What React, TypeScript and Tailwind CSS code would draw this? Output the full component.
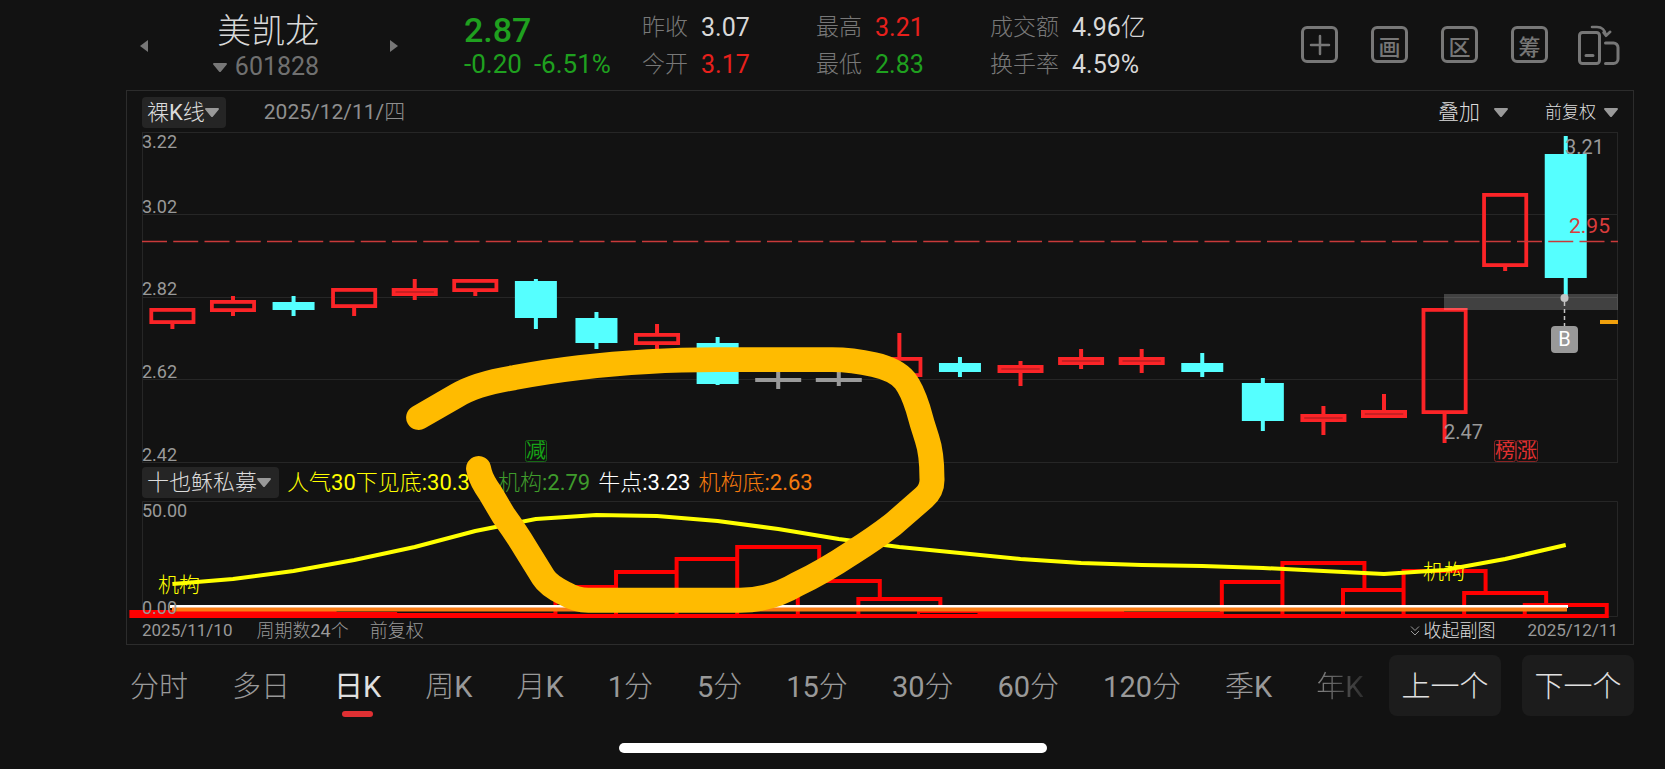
import { clsx } from "clsx";

type Kind = "up" | "down" | "flat";
type Candle = [kind: Kind, top: number, bottom: number, high: number, low: number];

const STEP = 60.58;
const centre = (i: number) => 30.4 + STEP * i;

const candles: Candle[] = [
  ["up", 176, 192, 176, 197],
  ["up", 168, 180, 164, 184],
  ["down", 170, 178, 164, 184],
  ["up", 156, 176, 156, 184],
  ["up", 156, 164, 147, 168],
  ["up", 147, 160, 147, 164],
  ["down", 149, 186, 147, 197],
  ["down", 186, 211, 180, 217],
  ["up", 201, 213, 192, 218],
  ["down", 211, 252, 205, 253],
  ["flat", 246, 250, 240, 257],
  ["flat", 246, 250, 240, 254],
  ["up", 225, 245, 201, 245],
  ["down", 231, 240, 225, 245],
  ["up", 233, 241, 229, 254],
  ["up", 225, 233, 217, 237],
  ["up", 225, 233, 217, 241],
  ["down", 231, 240, 221, 245],
  ["down", 251, 289, 246, 299],
  ["up", 282, 290, 274, 303],
  ["up", 278, 286, 262, 286],
  ["up", 176, 282, 176, 311],
  ["up", 61, 135, 61, 139],
  ["down", 22, 146, 4, 164],
];

const colors: Record<Kind, string> = {
  up: "#fb2427",
  down: "#55ffff",
  flat: "#9a9a9a",
};

// top edge of each bar in the indicator pane
const barTops = [
  109, 109, 110, 111, 112, 112, 112, 84, 69, 56, 44, 78, 96, 108, 110, 110, 111, 111, 79, 60, 87, 68, 90, 102,
];

const trend = [
  83, 78, 70, 59, 46, 30, 18, 14, 15, 20, 28, 38, 46, 52, 58, 62, 64, 65, 67, 70, 73, 69, 58, 44,
];

const priceTicks = [
  { label: "3.22", line: 0, text: 16 },
  { label: "3.02", line: 82, text: 81 },
  { label: "2.82", line: 165, text: 163 },
  { label: "2.62", line: 247, text: 246 },
  { label: "2.42", line: 330, text: 329 },
];

const quotes = [
  { label: "昨收", value: "3.07", color: "text-[#d8d8d8]" },
  { label: "最高", value: "3.21", color: "text-[#e8201c]" },
  { label: "成交额", value: "4.96亿", color: "text-[#d8d8d8]" },
  { label: "今开", value: "3.17", color: "text-[#e8201c]" },
  { label: "最低", value: "2.83", color: "text-[#1fa01f]" },
  { label: "换手率", value: "4.59%", color: "text-[#d8d8d8]" },
];

const tabs = ["分时", "多日", "日K", "周K", "月K", "1分", "5分", "15分", "30分", "60分", "120分", "季K"];

function Caret({ className }: { className?: string }) {
  return (
    <svg viewBox="0 0 14 9" className={clsx("h-[9px] w-[14px] shrink-0", className)} fill="currentColor" aria-hidden>
      <path d="M1.2 0h11.6c1 0 1.5 1 .8 1.8L8 8.4c-.6.7-1.4.7-2 0L.4 1.8C-.3 1 .2 0 1.2 0z" />
    </svg>
  );
}

function ToolButton({ label, children }: { label: string; children: React.ReactNode }) {
  return (
    <button
      aria-label={label}
      className="flex h-[37px] w-[37px] items-center justify-center rounded-md border-[3px] border-[#777] font-['Noto_Sans_CJK_SC',sans-serif] text-[22px] leading-none font-medium text-[#777]"
    >
      {children}
    </button>
  );
}

function Header() {
  return (
    <header className="flex h-[90px] items-center pt-0.5 pr-[45px] pl-[140px]">
      <div className="flex w-[258px] shrink-0 items-center justify-between text-[#777]">
        <button aria-label="上一只">
          <svg viewBox="0 0 8 12" className="h-3 w-2" fill="currentColor">
            <path d="M8 0v12L0 6z" />
          </svg>
        </button>
        <div className="mr-1.5 flex flex-col items-end pt-1">
          <h1 className="text-[34px] leading-[38px] text-[#d8d8d8]">美凯龙</h1>
          <button className="flex items-center gap-2 text-[25px] leading-[34px] text-[#707070]">
            <Caret className="text-[#777]" />
            601828
          </button>
        </div>
        <button aria-label="下一只">
          <svg viewBox="0 0 8 12" className="h-3 w-2" fill="currentColor">
            <path d="M0 0v12l8-6z" />
          </svg>
        </button>
      </div>

      <div className="ml-[66px] w-[178px] shrink-0 text-[#1fa01f]">
        <div className="text-[34px] leading-9 font-medium">2.87</div>
        <div className="flex gap-3 text-[26px] leading-8">
          <span>-0.20</span>
          <span>-6.51%</span>
        </div>
      </div>

      <dl className="grid shrink-0 grid-cols-[174px_174px_174px] gap-y-1">
        {quotes.map((q) => (
          <div key={q.label} className="flex items-center gap-[13px] leading-[33px]">
            <dt className="text-[23px] text-[#787878]">{q.label}</dt>
            <dd className={clsx("text-[25px] whitespace-nowrap", q.color)}>{q.value}</dd>
          </div>
        ))}
      </dl>

      <div className="ml-auto flex items-center gap-[30px] pb-[3px]">
        <div className="flex gap-[33px]">
          <ToolButton label="添加">
            <svg viewBox="0 0 22 22" className="h-[22px] w-[22px] shrink-0" stroke="currentColor" strokeWidth="2.5" strokeLinecap="round">
              <path d="M2 11h18M11 2v18" />
            </svg>
          </ToolButton>
          <ToolButton label="画线">画</ToolButton>
          <ToolButton label="区间统计">区</ToolButton>
          <ToolButton label="筹码分布">筹</ToolButton>
        </div>
        <button aria-label="切换竖屏" className="text-[#777]">
          <svg viewBox="0 0 42 40" className="h-10 w-[42px]" fill="none" stroke="currentColor" strokeWidth="3" strokeLinecap="round" strokeLinejoin="round">
            <rect x="1.5" y="7.5" width="20" height="31" rx="3" />
            <path d="M8 30.5h7M27.5 18h8a4.5 4.5 0 0 1 4.5 4.5v11.500a4.500 4.500 0 0 1-4.500 4.500h-8" />
            <path d="M14 2h5c5 0 8 3 9 8.500M25.500 7.500l2.500 3.300 4.200-4" strokeWidth="2.600" />
          </svg>
        </button>
      </div>
    </header>
  );
}

function PriceChart() {
  return (
    <svg viewBox="0 0 1476 331" className="block w-full overflow-visible">
      <path d="M.5.5h1475v330H.5z" fill="none" stroke="#262626" />
      {priceTicks.map((t) => (
        <g key={t.label}>
          <line x1="0" x2="1476" y1={t.line + 0.5} y2={t.line + 0.5} stroke="#262626" />
          <text x="0" y={t.text} fontSize="18" fill="#999">
            {t.label}
          </text>
        </g>
      ))}

      {candles.map(([kind, top, bottom, high, low], i) => {
        const x = centre(i);
        const color = colors[kind];
        const half = kind === "down" ? 21 : 23;
        return (
          <g key={i}>
            {high < top && <rect x={x - 2} y={high} width="4" height={top - high} fill={color} />}
            {low > bottom && <rect x={x - 2} y={bottom} width="4" height={low - bottom} fill={color} />}
            {kind === "up" ? (
              <rect
                x={x - half + 1.9}
                y={top + 1.9}
                width={half * 2 - 3.8}
                height={bottom - top - 3.8}
                fill="none"
                stroke={color}
                strokeWidth="3.8"
              />
            ) : (
              <rect x={x - half} y={top} width={half * 2} height={bottom - top} fill={color} />
            )}
          </g>
        );
      })}

      <line x1="0" x2="1476" y1="109.5" y2="109.5" stroke="#c93a3a" strokeWidth="1.5" strokeDasharray="25 6.25" />
      <rect x="1302" y="162" width="174" height="16" fill="#fff" fillOpacity="0.2" />
      <rect x="1458" y="188" width="18" height="4" fill="#f0a00c" />

      <g fontSize="20" fill="#999">
        <text x="1423" y="22">3.21</text>
        <text x="1302" y="307">2.47</text>
        <text x="1427" y="101" fontSize="21" fill="#d93c3c">
          2.95
        </text>
      </g>

      {/* buy marker */}
      <line x1="1422.5" x2="1422.5" y1="170" y2="194" stroke="#c4c4c4" strokeWidth="1.5" strokeDasharray="4 3" />
      <circle cx="1422.5" cy="166" r="4" fill="#c4c4c4" />
      <rect x="1409" y="194" width="27" height="27" rx="4" fill="#999" />
      <text x="1422.5" y="214" fontSize="20" fill="#fff" textAnchor="middle">
        B
      </text>

      {/* event tags */}
      <g fontSize="20" textAnchor="middle" className="font-['Noto_Sans_CJK_SC',sans-serif]">
        <rect x="383.5" y="308.5" width="21" height="21" rx="2" fill="none" stroke="#156915" />
        <text x="394" y="326" fill="#16a516">
          减
        </text>
        <g fill="none" stroke="#8a2424">
          <rect x="1352.5" y="308.5" width="21" height="21" rx="2" />
          <rect x="1374.5" y="308.5" width="21" height="21" rx="2" />
        </g>
        <text x="1363" y="326" fill="#e03030">
          榜
        </text>
        <text x="1385" y="326" fill="#e03030">
          涨
        </text>
      </g>
    </svg>
  );
}

function IndicatorChart() {
  return (
    <svg viewBox="0 0 1476 116" className="block w-full overflow-visible">
      <path d="M.5.5h1475v115H.5z" fill="none" stroke="#262626" />
      {barTops.map((top, i) => (
        <rect
          key={i}
          x={centre(i) - 41}
          y={top + 2}
          width="82"
          height={Math.max(113 - top, 1)}
          fill="#121212"
          stroke="#f00"
          strokeWidth="4"
        />
      ))}
      <path d="M28 105.5h1398" stroke="#fff" strokeWidth="3" />
      <path d="M30 108.5h1395" stroke="#f97b12" strokeWidth="4" />
      <polyline
        points={trend.map((y, i) => `${centre(i)},${y}`).join(" ")}
        fill="none"
        stroke="#ff0"
        strokeWidth="4"
        strokeLinejoin="round"
      />
      <g fontSize="21" fill="#ff0">
        <text x="16" y="91">机构</text>
        <text x="1281" y="78">机构</text>
      </g>
      <g fontSize="18" fill="#999">
        <text x="0" y="16">50.00</text>
        <text x="0" y="113">0.00</text>
      </g>
    </svg>
  );
}

// hand-drawn circle over both panes
function Annotation() {
  return (
    <svg viewBox="0 0 1508 555" className="pointer-events-none absolute inset-x-0 top-0 w-full" aria-hidden>
      <path
        transform="translate(-126 -91)"
        d="M418 418L456 396Q476 384 514 378Q545 372 579 368Q612 364 648 362Q680 360 717 360H832Q852 360 874 365Q896 370 905 381Q912 390 918 409Q922 424 927 439Q932 454 932 478Q933 490 924 498L893 525Q875 539 851 554Q824 572 797 585Q770 601 740 601H588Q576 601 564 594Q548 586 543 578L525 549Q516 534 503 516L490 494Q481 481 479 473L478 469"
        fill="none"
        stroke="#ffbb00"
        strokeWidth="25"
        strokeLinecap="round"
        strokeLinejoin="round"
      />
    </svg>
  );
}

export default function App() {
  return (
    <div className="flex min-h-screen flex-col bg-[#121212] font-[Roboto,'Noto_Sans_CJK_SC_Light','Noto_Sans_CJK_SC',sans-serif]">
      <Header />

      <main className="relative mr-[31px] ml-[126px] border border-[#2c2c2c] px-[15px]">
        <div className="flex h-[41px] items-center pt-0.5 text-[21px] text-[#dcdcdc]">
          <button className="flex h-[31px] items-center rounded bg-[#252525] pr-[7px] pl-[5px] text-[22px]">
            裸K线
            <Caret className="text-[#999]" />
          </button>
          <span className="ml-[38px] text-[#8f8f8f]">2025/12/11/四</span>
          <button className="ml-auto flex items-center gap-[14px]">
            叠加
            <Caret className="text-[#999]" />
          </button>
          <button className="ml-[37px] flex items-center gap-2 text-[17px]">
            前复权
            <Caret className="text-[#999]" />
          </button>
        </div>

        <PriceChart />

        <div className="flex h-[38px] items-center text-[22px]">
          <button className="flex h-[31px] items-center rounded bg-[#252525] pr-2 pl-[5px] text-[#dcdcdc]">
            十也稣私募
            <Caret className="text-[#999]" />
          </button>
          <span className="ml-2 text-[#ff0]">人气30下见底:30.3</span>
          <span className="ml-7 text-[#3f9b2c]">机构:2.79</span>
          <span className="ml-2 text-white">牛点:3.23</span>
          <span className="ml-2 text-[#f57a0e]">机构底:2.63</span>
        </div>

        <IndicatorChart />

        <div className="flex h-[27px] items-center text-[18px] text-[#999]">
          <span className="text-[17px]">2025/11/10</span>
          <span className="ml-6">周期数24个</span>
          <span className="ml-[21px]">前复权</span>
          <button className="ml-auto flex items-center gap-1 text-[#dcdcdc]">
            <svg viewBox="0 0 10 10" className="h-[10px] w-[10px]" fill="none" stroke="#999">
              <path d="M1 .5l4 4 4-4M1 5l4 4 4-4" />
            </svg>
            收起副图
          </button>
          <span className="ml-8 text-[17px]">2025/12/11</span>
        </div>

        <Annotation />
      </main>

      <div className="mr-[31px] ml-[126px] flex items-start pt-[10px] text-[29px]">
        <nav className="flex min-w-0 flex-1 gap-11 overflow-hidden pl-1">
          {tabs.map((tab) => (
            <button
              key={tab}
              className={clsx(
                "flex shrink-0 flex-col items-center leading-[65px]",
                tab === "日K" ? "font-[Roboto,'Noto_Sans_CJK_SC',sans-serif] text-[#e0e0e0]" : "text-[#999]"
              )}
            >
              {tab}
              {tab === "日K" && <span className="-mt-[9px] h-1.5 w-[31px] rounded-full bg-[#e03033]" />}
            </button>
          ))}
          <button className="shrink-0 self-start bg-linear-to-r from-[#858585] to-[#2e2e2e] bg-clip-text leading-[65px] text-transparent">
            年K
          </button>
        </nav>
        <div className="ml-5 flex shrink-0 gap-[21px] text-[#e0e0e0]">
          <button className="h-[61px] w-28 rounded-lg bg-[#1c1c1c] pt-1">上一个</button>
          <button className="h-[61px] w-28 rounded-lg bg-[#1c1c1c] pt-1">下一个</button>
        </div>
      </div>

      <div className="mx-auto mt-auto mb-4 h-[10px] w-[428px] rounded-full bg-white" />
    </div>
  );
}
